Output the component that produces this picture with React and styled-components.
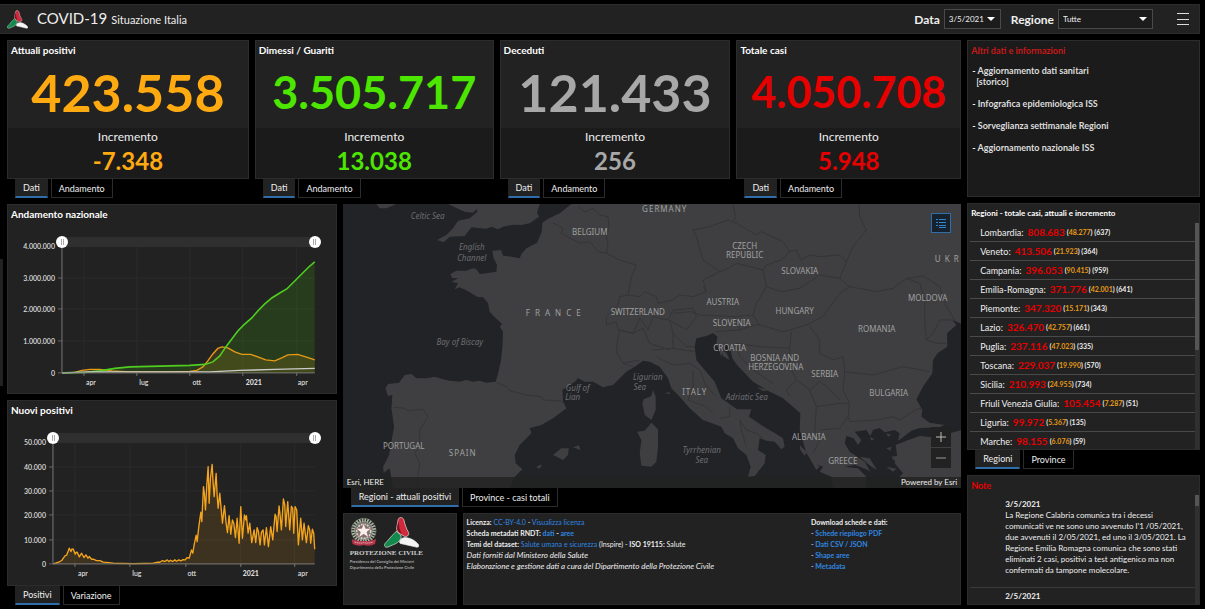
import React from "react";
import styled, { createGlobalStyle } from "styled-components";

const GlobalStyle = createGlobalStyle`
  *{ box-sizing:border-box; }
  body{
    margin:0;
    background-color:#000;
    color:#eee;
    font-family:"Lato", sans-serif;
    font-size:9px;
    line-height:11px;
  }
  button, select, input{ font:inherit; color:inherit; margin:0; }
  a{ text-decoration:none; color:#2f86e0; }
  h1, h2, p, ul{ margin:0; padding:0; font-size:inherit; font-weight:inherit; }
  ul{ list-style:none; }
`;

const Page = styled.div`
  min-height:100vh;
  display:flex;
  flex-direction:column;
  padding-top:4px;
`;

/* ---------- header ---------- */
const HeaderBar = styled.header`
  height:30px;
  margin-right:5px;
  padding:0 10px 0 7px;
  display:flex;
  align-items:center;
  background-color:#222;
  border:1px solid #2c2c2c;
  border-left:0;
`;
const Brand = styled.h1`
  flex:1;
  display:flex;
  align-items:baseline;
  gap:4px;
  margin-left:9px;
  font-size:15px;
  line-height:20px;
`;
const SubTitle = styled.span`
  font-size:11px;
`;
const Label = styled.label`
  margin-right:4px;
  font-size:12px;
  font-weight:bold;
`;
const SelectBox = styled.div`
  position:relative;
  width:${props => props.$width}px;
  margin-right:${props => props.$after}px;
`;
const Select = styled.select`
  appearance:none;
  width:100%;
  height:20px;
  padding:0 4px;
  border:1px solid #4a4a4a;
  border-radius:0;
  background-color:#1c1c1c;
  font-size:8px;
`;
const Caret = styled.span`
  position:absolute;
  right:6px;
  top:8px;
  border:4px solid transparent;
  border-top-color:#fff;
  border-bottom:0;
  pointer-events:none;
`;
const MenuButton = styled.button`
  width:12px;
  height:12px;
  padding:0;
  border:0;
  background:none;
  display:flex;
  flex-direction:column;
  justify-content:space-between;
`;
const Bar = styled.span`
  height:1px;
  background-color:#ddd;
`;

/* ---------- layout ---------- */
const Body = styled.main`
  position:relative;
  flex:1;
  display:grid;
  grid-template-columns:minmax(0, 955fr) minmax(0, 233fr);
  gap:6px;
  padding:6px 5px 4px 7px;
`;
const Column = styled.div`
  display:flex;
  flex-direction:column;
  gap:6px;
  min-width:0;
  flex:${props => props.$grow || 1} 1 0;
`;
const Row = styled.div`
  display:flex;
  gap:6px;
  flex:${props => (props.$fill ? 1 : "none")};
`;
const FooterRow = styled.div`
  display:grid;
  grid-template-columns:minmax(0, 114fr) minmax(0, 499fr);
  gap:6px;
`;
const Stack = styled.section`
  display:flex;
  flex-direction:column;
  min-width:0;
  flex:${props => props.$grow || "none"} 1 0;
`;
const Panel = styled.section`
  display:flex;
  flex-direction:column;
  min-width:0;
  overflow:hidden;
  background-color:${props => (props.$dark ? "#1b1b1b" : "#222")};
  border:1px solid #2c2c2c;
`;
const PanelTitle = styled.h2`
  padding:4px 3px;
  font-size:${props => props.$size || 10}px;
  font-weight:bold;
  color:${props => props.$color || "#fff"};
`;
const SideHandle = styled.button`
  position:absolute;
  left:0;
  top:50%;
  width:3px;
  height:127px;
  margin-top:-63px;
  padding:0;
  border:0;
  background-color:#222;
`;

/* ---------- tabs ---------- */
const TabList = styled.div`
  display:flex;
  gap:3px;
  padding-left:8px;
`;
const Tab = styled.button`
  height:19px;
  padding:0 7px;
  border:1px solid ${props => (props.$active ? "#222" : "#2c2c2c")};
  border-top:0;
  border-bottom:${props => (props.$active ? "2px solid #2f6ea8" : "1px solid #2c2c2c")};
  background-color:${props => (props.$active ? "#222" : "#000")};
  white-space:nowrap;
`;

function Tabs({ items }) {
  return (
    <TabList role="tablist">
      {items.map((item, i) => (
        <Tab key={item} role="tab" aria-selected={i === 0} $active={i === 0}>{item}</Tab>
      ))}
    </TabList>
  );
}

/* ---------- stat cards ---------- */
const StatValue = styled.p`
  height:68px;
  padding-bottom:4px;
  text-align:center;
  font-size:${props => props.$size}px;
  line-height:64px;
  font-weight:700;
  color:${props => props.$color};
`;
const Increment = styled.div`
  height:50px;
  padding-top:1px;
  text-align:center;
  background-color:#1b1b1b;
`;
const IncrementLabel = styled.p`
  font-size:12px;
  line-height:16px;
`;
const IncrementValue = styled.p`
  font-size:24px;
  line-height:32px;
  font-weight:700;
  color:${props => props.$color};
`;

const STATS = [
  { title: "Attuali positivi", value: "423.558", inc: "-7.348", color: "#ffaa10", size: 52, grow: 242 },
  { title: "Dimessi / Guariti", value: "3.505.717", inc: "13.038", color: "#4ce600", size: 45, grow: 239 },
  { title: "Deceduti", value: "121.433", inc: "256", color: "#a8a8a8", size: 52, grow: 231 },
  { title: "Totale casi", value: "4.050.708", inc: "5.948", color: "#e60000", size: 43, grow: 225 },
];

function Stat({ stat }) {
  return (
    <Stack $grow={stat.grow}>
      <Panel>
        <PanelTitle>{stat.title}</PanelTitle>
        <StatValue $color={stat.color} $size={stat.size}>{stat.value}</StatValue>
        <Increment>
          <IncrementLabel>Incremento</IncrementLabel>
          <IncrementValue $color={stat.color}>{stat.inc}</IncrementValue>
        </Increment>
      </Panel>
      <Tabs items={["Dati", "Andamento"]} />
    </Stack>
  );
}

/* ---------- charts ---------- */
const ChartPanel = styled(Panel)`
  flex:${props => props.$grow} 1 auto;
`;
const Slider = styled.div`
  position:relative;
  height:10px;
  margin:13px 21px 0 ${props => props.$left}px;
  background-color:#2f2f2f;
`;
const Range = styled.input`
  appearance:none;
  position:absolute;
  left:-6px;
  top:-1px;
  width:calc(100% + 12px);
  height:12px;
  background:none;
  pointer-events:none;
  &::-webkit-slider-thumb{
    appearance:none;
    width:12px;
    height:12px;
    border-radius:50%;
    pointer-events:auto;
    background:linear-gradient(90deg, #aaa 1px, #fff 1px, #fff 2px, #aaa 2px) center / 3px 6px no-repeat #fff;
  }
`;
const ChartSvg = styled.svg`
  display:block;
  width:100%;
  overflow:visible;
  font-family:"Lato", sans-serif;
  font-size:7px;
  font-weight:600;
`;

function Chart({ box, left, yTicks, xTicks, bottom, children }) {
  return (
    <ChartSvg viewBox={box}>
      {yTicks.map(([y, text]) => (
        <g key={text}>
          <line x1={left - 4} x2={left} y1={y} y2={y} stroke="#666" />
          <line x1={left} x2="315" y1={y} y2={y} stroke="#2b2b2b" />
          <text x={left - 7} y={y + 3} textAnchor="end" fill="#ddd">{text}</text>
        </g>
      ))}
      {xTicks.map(([x, lx, text], i) => (
        <g key={i}>
          <line x1={x} x2={x} y1={yTicks[0][0]} y2={bottom} stroke="#2b2b2b" />
          <line x1={x} x2={x} y1={bottom} y2={bottom + 3} stroke="#777" />
          <text x={lx} y={bottom + 12} textAnchor="middle" fill="#ddd" fontWeight={text === "2021" ? 900 : 600}>{text}</text>
        </g>
      ))}
      {children}
      <path d={`M${left} ${yTicks[0][0]}V${bottom}H315`} fill="none" stroke="#777" />
    </ChartSvg>
  );
}

const HEALED = "M62 373L85 372.500 100 371 115 368.500 130 367 150 366.500 190 365.500 205 364.500 213 362 220 356 226 347 232 339 238 331 244 325 252 318 258 311 265 304 272 298 280 293 287 289 295 281 302 274 309 267 315 262";
const POSITIVE = "M62 373L75 372.500 82 370.500 90 369.500 100 369.500 112 371 130 372 170 372 190 371.500 197 370.500 203 367 208 361 213 354 218 348.500 222 347 228 348 235 352 242 354.500 251 354.500 258 357 266 360 275 361 282 358 288 355 298 354.500 306 357 315 360";
const DEATHS = "M62 373L90 372 210 372 240 370.500 275 369.500 315 368.500";

// picchi e minimi settimanali dei nuovi positivi
const NEW_CASES = "160,507 180,500 186,496 195,483 200,481 208,460 213,470 216,462 220,463 226,478 229,472 232,472 238,486 245,475 252,488 258,480 264,490 268,485 275,493 280,493 290,497 300,497 310,502 340,505 400,506 460,505 474,502 480,502 488,497 495,500 502,495 507,500 512,496 518,500 525,495 530,499 537,495 543,498 550,494 556,495 562,488 568,490 575,465 579,475 583,450 589,421 592,440 597,395 603,352 606,380 611,275 614,300 617,345 621,270 625,215 628,325 632,250 637,208 640,265 643,305 649,235 652,300 655,340 660,295 668,385 674,332 679,385 683,413 688,362 693,418 698,375 702,385 707,428 712,370 718,445 723,335 728,430 734,360 738,375 740,362 745,415 750,385 756,443 763,405 768,443 772,398 776,410 781,450 785,412 790,405 794,450 800,398 806,455 813,395 819,435 826,358 829,365 832,410 838,333 841,360 845,405 851,312 855,330 858,395 864,320 870,405 875,334 879,340 882,415 886,335 891,345 896,450 903,370 908,435 913,385 920,443 926,392 930,405 933,445 938,403 942,415 945,463";

function NationalTrend() {
  return (
    <ChartPanel $grow={190}>
      <PanelTitle>Andamento nazionale</PanelTitle>
      <Slider $left={54}>
        <Range type="range" aria-label="Inizio periodo" defaultValue="0" />
        <Range type="range" aria-label="Fine periodo" defaultValue="100" />
      </Slider>
      <Chart
        box="8 247 328 145"
        left={62}
        bottom={373}
        yTicks={[[246, "4.000.000"], [278, "3.000.000"], [309, "2.000.000"], [341, "1.000.000"], [373, "0"]]}
        xTicks={[[84, 91, "apr"], [137, 144, "lug"], [190, 197, "ott"], [243, 254, "2021"], [297, 303, "apr"]]}
      >
        <path d={HEALED + "V373H62Z"} fill="#4ce600" opacity="0.13" />
        <path d={POSITIVE + "V373H62Z"} fill="#ffaa10" opacity="0.13" />
        <path d={POSITIVE} fill="none" stroke="#e69a17" strokeWidth="1.400" />
        <path d={HEALED} fill="none" stroke="#4fce20" strokeWidth="1.600" />
        <path d={DEATHS} fill="none" stroke="#ccc" strokeWidth="1.400" />
      </Chart>
    </ChartPanel>
  );
}

function NewPositives() {
  return (
    <ChartPanel $grow={186}>
      <PanelTitle>Nuovi positivi</PanelTitle>
      <Slider $left={45}>
        <Range type="range" aria-label="Inizio periodo" defaultValue="0" />
        <Range type="range" aria-label="Fine periodo" defaultValue="100" />
      </Slider>
      <Chart
        box="8 443 328 142"
        left={53}
        bottom={564}
        yTicks={[[442, "50.000"], [467, "40.000"], [491, "30.000"], [515, "20.000"], [540, "10.000"], [564, "0"]]}
        xTicks={[[75, 83, "apr"], [130, 137, "lug"], [186, 192, "ott"], [241, 251, "2021"], [295, 303, "apr"]]}
      >
        <g transform="translate(0 395) scale(0.3333)">
          <polygon points={"160,508 " + NEW_CASES + " 945,508"} fill="#ffaa10" opacity="0.12" />
          <polyline points={NEW_CASES} fill="none" stroke="#f5a51d" strokeWidth="4" strokeLinejoin="round" />
        </g>
      </Chart>
    </ChartPanel>
  );
}

/* ---------- map ---------- */
const MapPanel = styled.section`
  position:relative;
  flex:1 1 0;
  min-height:240px;
  overflow:hidden;
  background-color:#222327;
`;
const MapSvg = styled.svg`
  display:block;
  position:absolute;
  inset:0;
  width:100%;
  height:100%;
  font-family:"Noto Sans", sans-serif;
  font-size:8px;
`;
const Attribution = styled.div`
  position:absolute;
  left:0;
  right:0;
  bottom:0;
  height:11px;
  padding:0 4px;
  display:flex;
  justify-content:space-between;
  font-size:8px;
  background-color:rgba(34, 34, 34, 0.8);
`;
const MapTool = styled.button`
  width:20px;
  height:20px;
  padding:0;
  display:flex;
  align-items:center;
  justify-content:center;
  border:${props => (props.$legend ? "1px solid #2f6ea8" : "0")};
  background-color:${props => (props.$legend ? "#16232f" : "#222")};
`;
const LegendSpot = styled.div`
  position:absolute;
  right:10px;
  top:9px;
`;
const ZoomSpot = styled.div`
  position:absolute;
  right:10px;
  bottom:20px;
  display:flex;
  flex-direction:column;
  gap:1px;
`;

const MAINLAND = "M695 12L660 40 625 56 608 68 606 95 592 128 560 145 545 162 540 175 515 170 490 167 484 150 458 152 462 175 472 195 470 215 450 218 420 222 410 208 400 205 380 212 350 212 332 222 337 234 355 235 335 245 355 250 345 268 360 262 382 272 395 280 412 290 430 292 445 310 450 335 465 352 487 372 480 380 490 395 488 440 484 480 475 520 468 545 440 548 420 542 400 545 380 540 360 545 330 542 310 538 285 530 260 535 230 535 215 522 195 525 188 535 178 548 145 552 137 565 145 588 158 585 155 625 163 680 155 725 148 765 130 800 132 818 150 805 160 864 510 864 525 830 548 808 528 790 525 765 540 735 575 700 570 685 605 675 640 655 680 625 670 605 668 570 705 545 715 535 735 545 760 545 790 562 820 555 860 515 885 500 910 482 930 485 960 500 985 535 995 565 1020 590 1050 625 1090 660 1145 680 1155 700 1180 715 1195 745 1220 765 1233 800 1225 830 1245 828 1275 790 1278 765 1255 750 1260 715 1280 722 1305 725 1325 748 1335 740 1330 715 1310 702 1280 685 1228 650 1235 628 1192 628 1160 605 1145 595 1125 545 1095 510 1070 480 1065 440 1070 415 1100 408 1120 400 1133 410 1130 430 1145 470 1155 430 1170 440 1178 475 1192 495 1240 545 1280 570 1330 595 1382 640 1380 690 1400 760 1420 790 1450 800 1440 815 1475 830 1480 864 1580 864 1580 830 1555 805 1515 800 1545 795 1580 808 1592 815 1575 785 1530 755 1515 730 1520 708 1542 715 1555 735 1565 720 1545 695 1580 690 1592 708 1600 690 1620 684 1635 697 1665 690 1680 700 1675 722 1690 712 1715 692 1740 684 1800 682 1818 673 1866 675 1866 12Z";
const BLACK_SEA = "M1866 372L1845 362 1838 360 1850 375 1822 400 1823 440 1795 458 1780 480 1778 520 1750 560 1730 598 1748 630 1745 650 1770 668 1810 674 1866 675Z";
const ANATOLIA = "M1668 735L1700 722 1740 708 1780 712 1830 700 1866 690V864H1700L1680 830 1690 820 1665 790 1672 765Z";
const BRITAIN = "M325 12L350 24 375 35 400 38 412 26 412 36 390 55 355 62 340 85 320 105 292 120 312 127 330 110 375 108 395 82 440 86 455 80 475 88 490 80 520 74 545 75 570 70 598 50 592 38 600 12Z";
const ISLANDS = [
  "M110 12L120 25 140 25 165 14 165 12Z",
  "M940 570L948 590 948 630 935 660 915 645 908 610 912 598 935 588Z",
  "M935 668L955 688 955 740 950 785 935 800 905 797 900 760 905 720 892 695 915 692Z",
  "M640 765L665 745 687 745 685 765 670 780Z",
  "M700 742L718 736 722 750Z",
  "M590 800L605 793 605 800 596 806Z",
  "M975 580L990 576 990 582Z",
  "M1145 450L1160 458 1170 480 1150 468Z",
  "M1240 540L1290 555 1270 560Z",
  "M1250 562L1290 570 1270 573Z",
  "M1380 735L1400 755 1395 768 1382 750Z",
  "M1410 775L1440 800 1430 810Z",
  "M1590 712L1604 716 1596 722Z",
  "M1640 700L1655 704 1645 710Z",
  "M1640 745L1655 740 1652 752Z",
  "M1655 770L1690 765 1685 785 1665 783Z",
  "M1640 800L1670 806 1660 815Z",
  "M1560 770L1590 775 1612 810 1595 800Z",
];
const BORDERS = [
  "M640 68L670 85 665 100 720 130 750 125 775 155 800 160 805 135 800 110 808 80 805 50 780 45 760 25 735 35 715 20",
  "M800 160L840 180 890 195 875 230 865 285 840 290 835 315 800 350 800 375 830 365 835 390 880 400",
  "M865 285L900 290 915 275 950 290 955 310 1000 300 1020 285 1060 290 1100 275 1090 260",
  "M835 410L840 390 880 400 900 355 915 375 925 390 940 350 985 360 1000 330 1060 325 1070 350",
  "M835 410L830 455 850 490 880 500",
  "M472 548L500 560 510 572 560 585 605 590 610 600 665 603 672 610",
  "M162 622L195 625 205 632 250 628 265 650 240 690 240 730 225 760 240 790 230 860",
  "M1070 110L1060 90 1110 80 1165 60 1190 70 1250 105 1265 95 1330 125 1350 155 1325 180 1280 195 1270 210 1190 190 1165 205 1140 215 1090 180 1080 145Z",
  "M1180 12L1187 50 1182 65",
  "M1558 12L1560 50 1580 90 1540 140 1520 185 1500 165 1440 170 1410 165 1385 180 1370 150 1350 155",
  "M1520 185L1500 235 1440 225 1380 265 1325 275 1280 260 1270 210",
  "M1280 260L1250 310 1240 345 1185 350 1080 345 1055 335 1000 340",
  "M1140 215L1090 240 1100 275",
  "M1240 345L1260 375 1330 395 1350 390 1400 375 1450 350 1500 280 1530 260 1500 235",
  "M1530 260L1610 275 1660 265 1700 235 1740 250 1755 300 1755 360 1760 420 1790 430 1820 430",
  "M1700 235L1750 228 1800 260 1815 310 1845 360 1800 360 1780 400 1760 420",
  "M1185 350L1200 390 1130 395",
  "M1200 390L1245 375 1260 375",
  "M1190 430L1260 440 1350 445 1355 395",
  "M1190 430L1200 470 1240 510 1300 550",
  "M1350 445L1350 500 1370 540 1340 570 1350 590",
  "M1410 378L1440 420 1440 460 1480 480 1510 470 1515 515 1600 525 1690 500 1770 515",
  "M1515 515L1510 570 1530 610 1525 650 1530 665 1610 660 1660 650 1680 660 1735 625 1750 630",
  "M1370 540L1410 570 1430 620 1500 610 1530 610M1430 620L1425 690 1440 720 1420 760",
  "M1440 690L1500 685 1525 650M1410 570L1440 545 1460 560 1500 600",
  "M935 450L1000 445 1065 455M1000 445L1000 400 990 360 1040 390 1070 350",
  "M950 470L1000 495 1050 490 1080 510M1060 510L1060 560 1045 600 1100 620 1120 640",
  "M1080 510L1100 560 1130 590M1140 655L1170 650 1170 620M1200 660L1220 690 1250 700 1270 715M1200 660L1205 690 1220 740",
  "M1000 400L1040 440 1065 440M880 400L910 385 930 430 990 450M850 490L900 480",
];
// x, y, testo, spaziatura
const COUNTRIES = [
  [665, 212, "GERMANY", 1], [590, 235, "BELGIUM"], [745, 249, "CZECH"], [745, 258, "REPUBLIC"],
  [800, 274, "SLOVAKIA"], [723, 305, "AUSTRIA"], [795, 314, "HUNGARY"], [638, 315, "SWITZERLAND"],
  [732, 326, "SLOVENIA"], [730, 351, "CROATIA"], [775, 361, "BOSNIA AND"], [776, 370, "HERZEGOVINA"],
  [825, 377, "SERBIA"], [877, 332, "ROMANIA"], [928, 301, "MOLDOVA"], [889, 396, "BULGARIA"],
  [695, 395, "ITALY", 1], [809, 440, "ALBANIA"], [843, 464, "GREECE"], [404, 449, "PORTUGAL"],
  [463, 456, "SPAIN", 1], [556, 316, "FRANCE", 5], [949, 262, "UKR", 4],
];
const SEAS = [
  [428, 219, "Celtic Sea"], [472, 250, "English"], [472, 261, "Channel"], [460, 345, "Bay of Biscay"],
  [578, 391, "Gulf of"], [573, 400, "Lian"], [648, 380, "Ligurian"], [640, 390, "Sea"],
  [747, 400, "Adriatic Sea"], [702, 453, "Tyrrhenian"], [702, 463, "Sea"],
];

function EuropeMap() {
  return (
    <MapPanel>
      <MapSvg viewBox="343 204 619 284" preserveAspectRatio="xMidYMid slice" role="img" aria-label="Mappa">
        <g transform="translate(340 200) scale(0.3333)">
          <g fill="#3f3f41">
            <path d={MAINLAND} />
            <path d={ANATOLIA} />
            <path d={BRITAIN} />
            {ISLANDS.map(d => <path key={d} d={d} />)}
          </g>
          <path d={BLACK_SEA} fill="#222327" />
          <g fill="none" stroke="#343436" strokeWidth="3" strokeLinejoin="round">
            {BORDERS.map(d => <path key={d} d={d} />)}
          </g>
        </g>
        <g fill="#a0a0a0" textAnchor="middle">
          {COUNTRIES.map(([x, y, text, space]) => (
            <text key={text} x={x} y={y} letterSpacing={space || 0}>{text}</text>
          ))}
        </g>
        <g fill="#6c6c70" textAnchor="middle" fontStyle="italic">
          {SEAS.map(([x, y, text]) => <text key={text + y} x={x} y={y}>{text}</text>)}
        </g>
      </MapSvg>
      <LegendSpot>
        <MapTool $legend aria-label="Legenda">
          <svg width="10" height="10" viewBox="0 0 10 10" stroke="#2f86d0" fill="none">
            <path d="M0 1.500h2M0 4.500h2M0 7.500h2M3 1.500h7M3 4.500h7M3 7.500h7M3 9.500h7" />
          </svg>
        </MapTool>
      </LegendSpot>
      <ZoomSpot>
        <MapTool aria-label="Zoom avanti">
          <svg width="10" height="10" viewBox="0 0 10 10" stroke="#bbb"><path d="M5 0V10M0 5H10" /></svg>
        </MapTool>
        <MapTool aria-label="Zoom indietro">
          <svg width="10" height="10" viewBox="0 0 10 10" stroke="#999"><path d="M0 5H10" /></svg>
        </MapTool>
      </ZoomSpot>
      <Attribution><span>Esri, HERE</span><span>Powered by Esri</span></Attribution>
    </MapPanel>
  );
}

/* ---------- logos ---------- */
function CivilLogo({ width, height }) {
  return (
    <svg width={width} height={height} viewBox="0 0 104 92" aria-hidden="true">
      <g stroke="#e8e8e8" strokeWidth="2" strokeLinejoin="round">
        <path d="M42 8C44 0 55 -1 59 8C62 22 66 34 73 46C76 54 68 60 60 57L49 51C40 46 36 40 38 30Z" fill="#cf2a3c" />
        <path d="M37 42C40 48 50 50 51 58C50 70 40 78 28 82L12 89C4 92 -1 86 3 79C12 70 22 56 37 42Z" fill="#128a4c" />
        <path d="M46 74C48 65 54 61 65 61C82 63 98 74 103 83C105 88 101 91 95 89L55 80C49 79 46 78 46 74Z" fill="#f4f4f4" />
      </g>
      <path d="M43 10L39 30C38 39 42 45 52 50L46 34Z" fill="#7d1422" />
    </svg>
  );
}

function Emblem() {
  return (
    <svg width="28" height="30" viewBox="0 0 84 90" aria-hidden="true">
      <circle cx="41" cy="41" r="29" fill="#77756f" />
      <circle cx="41" cy="41" r="32" fill="none" stroke="#a9b3a2" strokeWidth="11" strokeDasharray="5 3" />
      <circle cx="41" cy="41" r="37" fill="none" stroke="#6b7f60" strokeWidth="3" strokeDasharray="4 5" />
      <circle cx="41" cy="43" r="21" fill="none" stroke="#d6d0c8" strokeWidth="5" strokeDasharray="6 3" />
      <path d="M41 17L47 34 65 34 51 45 56 62 41 52 26 62 31 45 17 34 35 34Z" fill="#f4f0ec" stroke="#9c5a5a" strokeWidth="2" />
      <path d="M5 66Q20 74 41 72Q62 74 78 66L75 81Q58 89 41 84Q24 89 8 81Z" fill="#b8344a" />
      <path d="M14 75Q28 80 41 77Q55 80 69 75" fill="none" stroke="#e9c8c8" strokeWidth="3" strokeDasharray="4 2" />
    </svg>
  );
}

const LogoPanel = styled(Panel)`
  height:92px;
  padding:3px 6px;
`;
const LogoRow = styled.div`
  display:flex;
  gap:6px;
`;
const LogoName = styled.p`
  font-family:"Liberation Serif", serif;
  font-size:7px;
  line-height:11px;
  font-weight:bold;
  color:#ccc;
  white-space:nowrap;
`;
const LogoLine = styled.p`
  font-size:4px;
  line-height:6px;
  font-weight:bold;
  color:#aaa;
  white-space:nowrap;
`;

/* ---------- info ---------- */
const InfoPanel = styled(Panel)`
  height:92px;
  padding:3px;
  flex-direction:row;
  font-size:7px;
  i{ font-size:8px; }
`;
const InfoText = styled.div`
  flex:${props => props.$grow} 1 0;
  p{ height:11px; }
`;

function Info() {
  return (
    <InfoPanel>
      <InfoText $grow={346}>
        <p><b>Licenza:</b> <a href="#licenza">CC-BY-4.0</a> - <a href="#visualizza">Visualizza licenza</a></p>
        <p><b>Scheda metadati RNDT: <a href="#dati">dati</a> - <a href="#aree">aree</a></b></p>
        <p><b>Temi del dataset:</b> <a href="#salute">Salute umana e sicurezza</a> (Inspire) - <b>ISO 19115:</b> Salute</p>
        <p><i>Dati forniti dal Ministero della Salute</i></p>
        <p><i>Elaborazione e gestione dati a cura del Dipartimento della Protezione Civile</i></p>
      </InfoText>
      <InfoText $grow={147}>
        <p><b>Download schede e dati:</b></p>
        <p>- <b><a href="#pdf">Schede riepilogo PDF</a></b></p>
        <p>- <b><a href="#csv">Dati CSV / JSON</a></b></p>
        <p>- <b><a href="#shape">Shape aree</a></b></p>
        <p>- <b><a href="#metadata">Metadata</a></b></p>
      </InfoText>
    </InfoPanel>
  );
}

/* ---------- right column ---------- */
const LinksPanel = styled(Panel)`
  height:157px;
`;
const LinkList = styled.ul`
  padding-top:5px;
`;
const LinkItem = styled.li`
  margin:0 4px 11px;
  font-weight:bold;
  a{ color:#ddd; }
`;
const Indent = styled.span`
  display:block;
  padding-left:4px;
`;
const RegionsPanel = styled(Panel)`
  flex:1 1 0;
  min-height:246px;
`;
const ScrollArea = styled.div`
  flex:1 1 0;
  min-height:0;
  display:flex;
  padding-left:2px;
  overflow:hidden;
`;
const RegionList = styled.ul`
  flex:1;
  min-width:0;
`;
const RegionRow = styled.li`
  height:19px;
  padding-left:10px;
  display:flex;
  align-items:center;
  border-bottom:1px solid #4a4a4a;
  white-space:nowrap;
`;
const Total = styled.b`
  margin:0 2px 0 4px;
  font-size:10px;
  color:#e60000;
`;
const Small = styled.span`
  font-size:7px;
  font-weight:bold;
`;
const Current = styled.span`
  color:#e69a17;
`;
const ScrollTrack = styled.div`
  width:4px;
  background-color:#303030;
`;
const ScrollThumb = styled.div`
  height:${props => props.$size}%;
  background-color:#555;
`;
const NotePanel = styled(Panel)`
  height:130px;
`;
const NoteText = styled.div`
  flex:1;
  min-width:0;
  font-size:8px;
`;
const Note = styled.article`
  margin-bottom:3px;
  padding:4px 5px 11px 35px;
  border-bottom:1px solid #3a3a3a;
`;
const NextNote = styled.p`
  padding-left:35px;
  font-weight:bold;
`;

const REGIONS = [
  ["Lombardia", "808.683", "48.277", "637"],
  ["Veneto", "413.506", "21.923", "364"],
  ["Campania", "396.053", "90.415", "959"],
  ["Emilia-Romagna", "371.776", "42.001", "641"],
  ["Piemonte", "347.320", "15.171", "343"],
  ["Lazio", "326.470", "42.757", "661"],
  ["Puglia", "237.116", "47.023", "335"],
  ["Toscana", "229.037", "19.990", "570"],
  ["Sicilia", "210.993", "24.955", "734"],
  ["Friuli Venezia Giulia", "105.454", "7.287", "51"],
  ["Liguria", "99.972", "5.367", "135"],
  ["Marche", "98.155", "6.076", "59"],
];

function Regions() {
  return (
    <RegionsPanel>
      <PanelTitle $size={8}>Regioni - totale casi, attuali e incremento</PanelTitle>
      <ScrollArea>
        <RegionList>
          {REGIONS.map(([name, total, current, inc]) => (
            <RegionRow key={name}>
              {name}: <Total>{total}</Total>
              <Small>(<Current>{current}</Current>) ({inc})</Small>
            </RegionRow>
          ))}
        </RegionList>
        <ScrollTrack><ScrollThumb $size={56} /></ScrollTrack>
      </ScrollArea>
    </RegionsPanel>
  );
}

function Notes() {
  return (
    <NotePanel>
      <PanelTitle $size={9} $color="#e60000">Note</PanelTitle>
      <ScrollArea>
        <NoteText>
          <Note>
            <p><b>3/5/2021</b></p>
            <p>La Regione Calabria comunica tra i decessi comunicati ve ne sono uno avvenuto l'1 /05/2021, due avvenuti il 2/05/2021, ed uno il 3/05/2021. La Regione Emilia Romagna comunica che sono stati eliminati 2 casi, positivi a test antigenico ma non confermati da tampone molecolare.</p>
          </Note>
          <NextNote>2/5/2021</NextNote>
        </NoteText>
        <ScrollTrack><ScrollThumb $size={10} /></ScrollTrack>
      </ScrollArea>
    </NotePanel>
  );
}

function Header() {
  return (
    <HeaderBar>
      <CivilLogo width={21} height={19} />
      <Brand>COVID-19 <SubTitle>Situazione Italia</SubTitle></Brand>
      <Label htmlFor="data">Data</Label>
      <SelectBox $width={57} $after={10}>
        <Select id="data"><option>3/5/2021</option></Select>
        <Caret />
      </SelectBox>
      <Label htmlFor="regione">Regione</Label>
      <SelectBox $width={95} $after={24}>
        <Select id="regione"><option>Tutte</option></Select>
        <Caret />
      </SelectBox>
      <MenuButton aria-label="Menu"><Bar /><Bar /><Bar /></MenuButton>
    </HeaderBar>
  );
}

function App() {
  return (
    <Page>
      <GlobalStyle />
      <Header />
      <Body>
        <SideHandle aria-label="Apri pannello" />
        <Column>
          <Row>
            {STATS.map(stat => <Stat key={stat.title} stat={stat} />)}
          </Row>
          <Row $fill>
            <Column $grow={330}>
              <NationalTrend />
              <Stack>
                <NewPositives />
                <Tabs items={["Positivi", "Variazione"]} />
              </Stack>
            </Column>
            <Column $grow={619}>
              <Stack $grow={1}>
                <EuropeMap />
                <Tabs items={["Regioni - attuali positivi", "Province - casi totali"]} />
              </Stack>
              <FooterRow>
                <LogoPanel>
                  <LogoRow><Emblem /><CivilLogo width={35} height={31} /></LogoRow>
                  <LogoName>PROTEZIONE CIVILE</LogoName>
                  <LogoLine>Presidenza del Consiglio dei Ministri</LogoLine>
                  <LogoLine>Dipartimento della Protezione Civile</LogoLine>
                </LogoPanel>
                <Info />
              </FooterRow>
            </Column>
          </Row>
        </Column>
        <Column>
          <LinksPanel $dark>
            <PanelTitle $size={9} $color="#c81818">Altri dati e informazioni</PanelTitle>
            <LinkList>
              <LinkItem>- <a href="#sanitari">Aggiornamento dati sanitari<Indent>[storico]</Indent></a></LinkItem>
              <LinkItem>- <a href="#infografica">Infografica epidemiologica ISS</a></LinkItem>
              <LinkItem>- <a href="#sorveglianza">Sorveglianza settimanale Regioni</a></LinkItem>
              <LinkItem>- <a href="#nazionale">Aggiornamento nazionale ISS</a></LinkItem>
            </LinkList>
          </LinksPanel>
          <Stack $grow={1}>
            <Regions />
            <Tabs items={["Regioni", "Province"]} />
          </Stack>
          <Notes />
        </Column>
      </Body>
    </Page>
  );
}

export default App;
